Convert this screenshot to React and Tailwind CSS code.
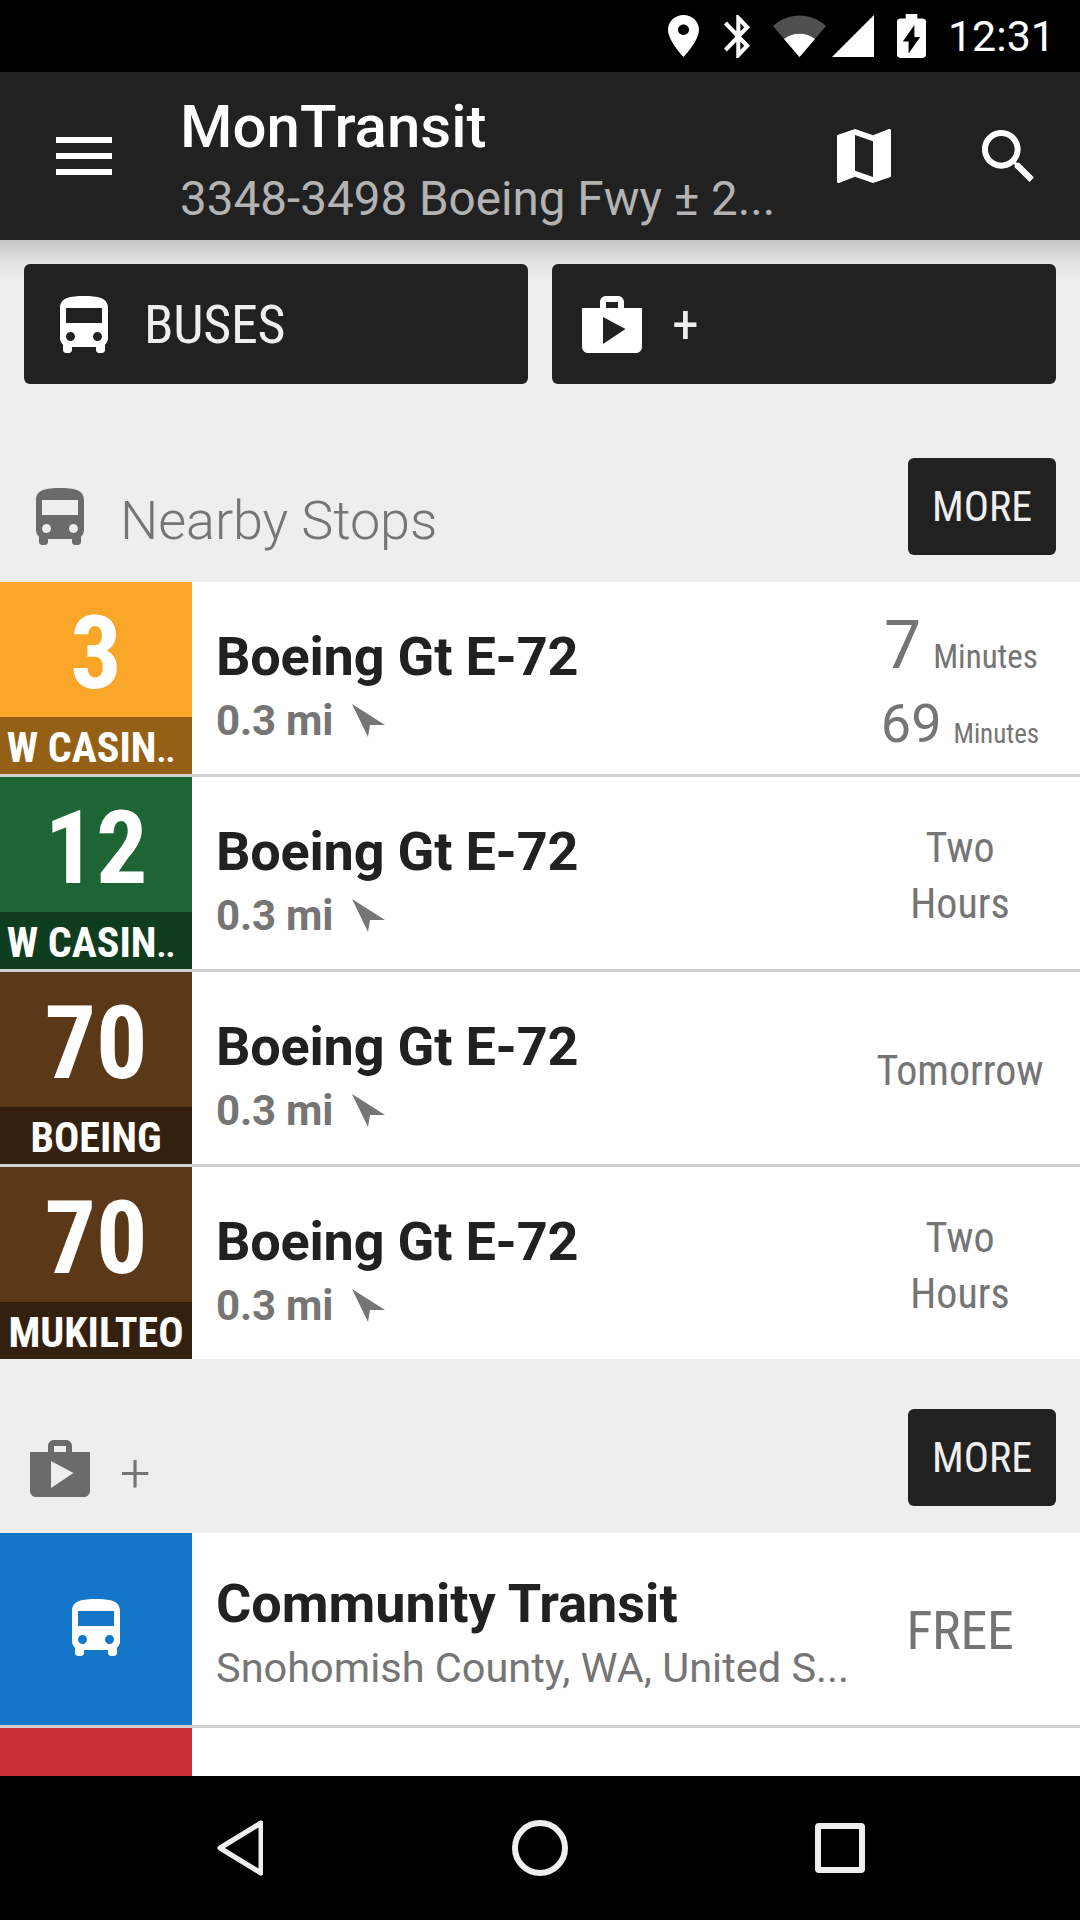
const BUS = "M4 16c0 .88.39 1.67 1 2.22V20c0 .55.45 1 1 1h1c.55 0 1-.45 1-1v-1h8v1c0 .55.45 1 1 1h1c.55 0 1-.45 1-1v-1.78c.61-.55 1-1.34 1-2.22V6c0-3.5-3.58-4-8-4s-8 .5-8 4v10zm3.5 1c-.83 0-1.5-.67-1.5-1.5S6.67 14 7.5 14s1.5.67 1.5 1.5S8.33 17 7.5 17zm9 0c-.83 0-1.5-.67-1.5-1.5s.67-1.5 1.5-1.5 1.5.67 1.5 1.5-.67 1.5-1.5 1.5zm1.5-6H6V6h12v5z";
const SHOP = "M16 6V4c0-1.11-.89-2-2-2h-4c-1.11 0-2 .89-2 2v2H2v13c0 1.11.89 2 2 2h16c1.11 0 2-.89 2-2V6h-6zm-6-2h4v2h-4V4zM9 18V9l7.5 4L9 18z";

const Ico = ({ d, vb = "2 2 20 20", className, fill = "currentColor" }) => (
  <svg viewBox={vb} className={className} fill={fill} preserveAspectRatio="none"><path d={d} /></svg>
);

const BusIcon = ({ className }) => <Ico d={BUS} vb="4 2 16 19" className={className} />;
const ShopIcon = ({ className }) => <Ico d={SHOP} vb="2 2 20 19" className={className} />;

const Cond = ({ children, className = "" }) => (
  <span className={`[font-stretch:75%] ${className}`}>{children}</span>
);

const Arrow = () => (
  <svg viewBox="0 0 34 33" className="w-[34px] h-[33px] ml-[18px] text-[#757575]" fill="currentColor"><path d="M1 0 L34 21 L19 21 L17 33 Z" /></svg>
);

function Row({ color, dark, num, sub, last, children }) {
  return (
    <div className={`flex bg-white shrink-0 ${last ? "h-[192px]" : "h-[195px] border-b-[3px] border-[#d0d0d0]"}`}>
      <div className={`w-[192px] flex flex-col ${color}`}>
        <div className="h-[135px] flex items-center justify-center text-white pt-[7px]">
          <Cond className="text-[102px] font-bold leading-none">{num}</Cond>
        </div>
        <div className={`h-[57px] flex items-center justify-center text-white pt-[4px] ${dark}`}>
          {sub === "W CASIN.." ? (
            <Cond className="text-[42px] font-bold leading-none whitespace-nowrap mr-[11px]">W CASIN<span className="text-[34px] tracking-[-1px]">..</span></Cond>
          ) : (
            <Cond className="text-[42px] font-bold leading-none whitespace-nowrap">{sub}</Cond>
          )}
        </div>
      </div>
      <div className="flex-1 flex min-w-0">
        <div className="flex-1 pl-[24px] pt-[45px] min-w-0">
          <div className="text-[54px] font-bold leading-[60px] tracking-[-0.2px] text-[#212121] whitespace-nowrap">Boeing Gt E-72</div>
          <div className="flex items-center h-[50px] mt-[9px] text-[42px] font-bold tracking-[-0.2px] text-[#757575] leading-none">
            0.3 mi
            <span className="-translate-y-px"><Arrow /></span>
          </div>
        </div>
        <div className="w-[240px] pt-[5px] flex flex-col items-center justify-center text-[#757575]">{children}</div>
      </div>
    </div>
  );
}

const Two = () => (
  <Cond className="font-normal text-[42px] leading-[56px] text-center">Two<br />Hours</Cond>
);

const More = () => (
  <div className="w-[148px] h-[97px] rounded-[6px] bg-[#212121] text-[#eeeeee] flex items-center justify-center text-[42px]">
    <Cond>MORE</Cond>
  </div>
);

export default function App() {
  return (
    <div className="w-[1080px] h-[1920px] overflow-hidden flex flex-col bg-[#eeeeee] [font-family:Roboto,sans-serif]">
      {/* status bar */}
      <div className="h-[72px] bg-black flex items-center justify-end pr-[25px] text-white shrink-0">
        <Ico className="w-[31px] h-[42px] mr-[25px]" vb="5 2 14 20" d="M12 2C8.13 2 5 5.13 5 9c0 5.25 7 13 7 13s7-7.75 7-13c0-3.87-3.13-7-7-7zm0 9.5c-1.38 0-2.5-1.12-2.5-2.5s1.12-2.5 2.5-2.5 2.5 1.12 2.5 2.5-1.12 2.5-2.5 2.5z" />
        <Ico className="w-[26px] h-[43px] mr-[23px]" vb="5 2 12.71 20" d="M17.71 7.71L12 2h-1v7.59L6.41 5 5 6.41 10.59 12 5 17.59 6.41 19 11 14.41V22h1l5.71-5.71-4.3-4.29 4.3-4.29zM13 5.83l1.88 1.88L13 9.59V5.83zm1.88 10.46L13 18.17v-3.76l1.88 1.88z" />
        <svg viewBox="0 0 53 42" className="w-[53px] h-[42px] mr-[6px]">
          <path d="M0 11 C15 -3 38 -3 53 11 L26.5 42 Z" fill="#4f4f4f" />
          <path d="M11 24 C20 17 33 17 42 24 L26.5 42 Z" fill="#fff" />
        </svg>
        <svg viewBox="0 0 42 42" className="w-[42px] h-[42px] mr-[23px]"><path d="M0 42 L42 0 L42 42 Z" fill="#fff" /></svg>
        <Ico className="w-[29px] h-[44px] mr-[22px]" vb="7 2 10 20" d="M15.67 4H14V2h-4v2H8.33C7.6 4 7 4.6 7 5.33v15.33C7 21.4 7.6 22 8.33 22h7.33c.74 0 1.34-.6 1.34-1.33V5.33C17 4.6 16.4 4 15.67 4zM11 20v-5.5H9L13 7v5.5h2L11 20z" />
        <span className="text-[43px] leading-none">12:31</span>
      </div>

      {/* toolbar */}
      <div className="h-[168px] bg-[#212121] flex items-center shrink-0 relative text-white">
        <div className="w-[56px] ml-[56px] flex flex-col gap-[10px] shrink-0">
          <div className="h-[6px] bg-white" />
          <div className="h-[6px] bg-white" />
          <div className="h-[6px] bg-white" />
        </div>
        <div className="ml-[68px] w-[600px] pt-[9px] flex flex-col">
          <div className="text-[60px] font-medium text-white leading-[70px]">MonTransit</div>
          <div className="text-[47.6px] text-[#b3b3b3] leading-[60px] mt-[7px] whitespace-nowrap">3348-3498 Boeing Fwy ± 2...</div>
        </div>
        <Ico className="w-[54px] h-[54px] absolute left-[837px] top-[57px]" vb="3 3 18 18" d="M20.5 3l-.16.03L15 5.1 9 3 3.36 4.9c-.21.07-.36.25-.36.48V20.5c0 .28.22.5.5.5l.16-.03L9 18.9l6 2.1 5.64-1.9c.21-.07.36-.25.36-.48V3.5c0-.28-.22-.5-.5-.5zM15 19l-6-2.11V5l6 2.11V19z" />
        <Ico className="w-[52px] h-[52px] absolute left-[982px] top-[58px]" vb="3 3 17.5 17.5" d="M15.5 14h-.79l-.28-.27C15.41 12.59 16 11.11 16 9.5 16 5.91 13.09 3 9.5 3S3 5.91 3 9.5 5.91 16 9.5 16c1.61 0 3.09-.59 4.23-1.57l.27.28v.79l5 4.99L20.49 19l-4.99-5zm-6 0C7.01 14 5 11.99 5 9.5S7.01 5 9.5 5 14 7.01 14 9.5 11.99 14 9.5 14z" />
      </div>

      {/* content */}
      <div className="flex-1 flex flex-col min-h-0 overflow-hidden relative">
        <div className="absolute top-0 inset-x-0 h-[42px] bg-[linear-gradient(to_bottom,rgba(0,0,0,0.17),rgba(0,0,0,0.04)_58%,rgba(0,0,0,0))]" />
        <div className="relative grid grid-cols-2 gap-6 px-6 pt-6 shrink-0">
          <div className="h-[120px] rounded-[6px] bg-[#212121] flex items-center pl-9 text-white">
            <BusIcon className="w-[48px] h-[57px]" />
            <Cond className="ml-[36px] text-[54px] font-normal tracking-[-0.3px] text-[#eeeeee]">BUSES</Cond>
          </div>
          <div className="h-[120px] rounded-[6px] bg-[#212121] flex items-center pl-[30px] text-white">
            <ShopIcon className="w-[60px] h-[57px]" />
            <Cond className="ml-[30px] text-[54px] font-normal text-[#eeeeee]">+</Cond>
          </div>
        </div>

        <div className="h-[74px] shrink-0" />
        <div className="flex items-end justify-between pr-6 pb-[27px] h-[124px] shrink-0">
          <div className="flex items-center text-[#6b6b6b] pl-9 mb-[7px]">
            <BusIcon className="w-[48px] h-[57px]" />
            <span className="ml-[36px] mt-[10px] text-[54px] font-light tracking-[-0.1px] text-[#757575] leading-none">Nearby Stops</span>
          </div>
          <More />
        </div>

        <Row color="bg-[#faa629]" dark="bg-[#946016]" num="3" sub="W CASIN..">
          <div className="flex items-baseline h-[86px] pt-[5px] ml-[2px]">
            <span className="text-[66px] font-normal leading-none">7</span>
            <Cond className="ml-3 text-[33px] font-normal">Minutes</Cond>
          </div>
          <div className="flex items-baseline pt-[3px]">
            <span className="text-[54px] font-normal leading-none">69</span>
            <Cond className="ml-3 text-[27px] font-normal translate-y-px">Minutes</Cond>
          </div>
        </Row>
        <Row color="bg-[#1e6536]" dark="bg-[#103d20]" num="12" sub="W CASIN.."><Two /></Row>
        <Row color="bg-[#5a3818]" dark="bg-[#34200f]" num="70" sub="BOEING">
          <Cond className="font-normal text-[42px]">Tomorrow</Cond>
        </Row>
        <Row color="bg-[#5a3818]" dark="bg-[#34200f]" num="70" sub="MUKILTEO" last><Two /></Row>

        <div className="flex items-end justify-between pr-6 pb-[27px] h-[174px] shrink-0">
          <div className="flex items-center text-[#6b6b6b] pl-[30px] mb-[5px]">
            <ShopIcon className="w-[60px] h-[57px]" />
            <span className="ml-[30px] mt-[11px] text-[54px] font-light text-[#757575] leading-none">+</span>
          </div>
          <More />
        </div>

        <div className="flex h-[195px] border-b-[3px] border-[#d0d0d0] bg-white shrink-0">
          <div className="w-[192px] bg-[#1476c9] flex items-center justify-center text-white">
            <BusIcon className="w-[48px] h-[57px] mb-[3px]" />
          </div>
          <div className="flex-1 pl-[24px] pt-[41px] min-w-0">
            <div className="text-[54px] font-bold leading-[60px] text-[#212121] whitespace-nowrap">Community Transit</div>
            <div className="text-[41.5px] text-[#757575] leading-[50px] mt-[9px] whitespace-nowrap">Snohomish County, WA, United S...</div>
          </div>
          <div className="w-[240px] flex items-center justify-center text-[#757575] pt-[2px]">
            <Cond className="text-[54px] font-normal tracking-[-0.3px]">FREE</Cond>
          </div>
        </div>
        <div className="flex-1 flex bg-white">
          <div className="w-[192px] bg-[#c82f36]" />
        </div>
      </div>

      {/* nav bar */}
      <div className="h-[144px] bg-black shrink-0 flex items-center relative text-[#eeeeee]">
        <svg viewBox="0 0 46 56" className="w-[46px] h-[56px] absolute left-[217px] top-[44px]" fill="none" stroke="currentColor" strokeWidth="5" strokeLinejoin="round"><path d="M44 3 L3 28 L44 53 Z" /></svg>
        <svg viewBox="0 0 56 56" className="w-[56px] h-[56px] absolute left-[512px] top-[44px]" fill="none" stroke="currentColor" strokeWidth="6"><circle cx="28" cy="28" r="25" /></svg>
        <svg viewBox="0 0 50 50" className="w-[50px] h-[50px] absolute left-[815px] top-[47px]" fill="none" stroke="currentColor" strokeWidth="6" strokeLinejoin="round"><rect x="3" y="3" width="44" height="44" rx="1" /></svg>
      </div>
    </div>
  );
}
